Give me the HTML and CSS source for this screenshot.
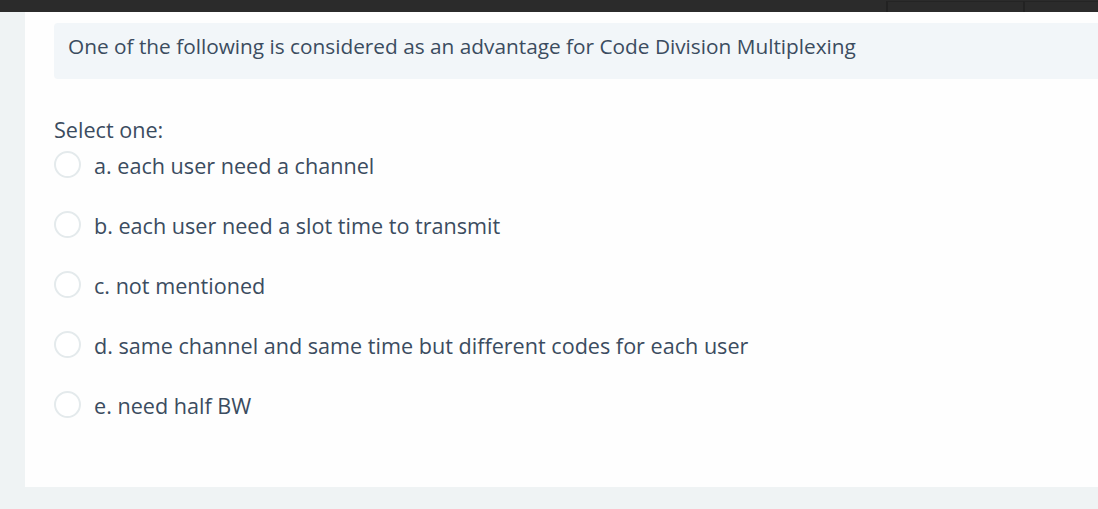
FILE: index.html
```html
<!DOCTYPE html>
<html>
<head>
<meta charset="utf-8">
<link rel="stylesheet" href="styles.css">
</head>
<body>
<div class="topbar">
  <div class="tb-fill"></div>
  <div class="tb-tab tb-tab1"></div>
  <div class="tb-tab tb-tab2"></div>
</div>
<div class="main">
  <div class="side"></div>
  <div class="card">
    <div class="qtext">One of the following is considered as an advantage for Code Division Multiplexing</div>
    <div class="prompt">Select one:</div>
    <div class="answers">
      <div class="opt"><span class="radio"></span><span class="label">a. each user need a channel</span></div>
      <div class="opt"><span class="radio"></span><span class="label">b. each user need a slot time to transmit</span></div>
      <div class="opt"><span class="radio"></span><span class="label">c. not mentioned</span></div>
      <div class="opt"><span class="radio"></span><span class="label">d. same channel and same time but different codes for each user</span></div>
      <div class="opt"><span class="radio"></span><span class="label">e. need half BW</span></div>
    </div>
  </div>
</div>
<div class="bottom"></div>
</body>
</html>
```
FILE: styles.css
```css
html, body {
  margin: 0;
  padding: 0;
  background: #eff3f4;
  font-family: "Open Sans", "Liberation Sans", sans-serif;
  color: #3b4c60;
  overflow: hidden;
}
.topbar {
  height: 12px;
  background: #2b2b2b;
  display: flex;
}
.tb-fill { flex: 1; }
.tb-tab {
  height: 11px;
  border-left: 2px solid #222;
  border-top: 1px solid #242424;
  box-sizing: border-box;
  margin-top: 1px;
}
.tb-tab1 { width: 137px; }
.tb-tab2 { width: 75px; }
.main {
  display: flex;
  height: 475px;
}
.side {
  width: 25px;
  flex: none;
}
.card {
  flex: 1;
  background: #fefefe;
  padding: 11px 0 0 29px;
}
.qtext {
  background: #f2f6f9;
  border-radius: 4px 0 0 4px;
  height: 56px;
  box-sizing: border-box;
  padding: 0 14px 11px;
  display: flex;
  align-items: center;
  font-size: 20.8px;
  line-height: 28px;
  white-space: nowrap;
}
.prompt {
  margin-top: 37px;
  font-size: 21.6px;
  line-height: 28px;
}
.answers {
  display: flex;
  flex-direction: column;
  gap: 32px;
  margin-top: 8px;
}
.opt {
  display: flex;
  align-items: center;
  height: 28px;
}
.radio {
  width: 27px;
  height: 27px;
  box-sizing: border-box;
  border: 2px solid #e4eaec;
  border-radius: 50%;
  flex: none;
  background: #fff;
  margin-top: -3px;
}
.label {
  margin-left: 13px;
  font-size: 21.6px;
  line-height: 28px;
  white-space: nowrap;
}
```
